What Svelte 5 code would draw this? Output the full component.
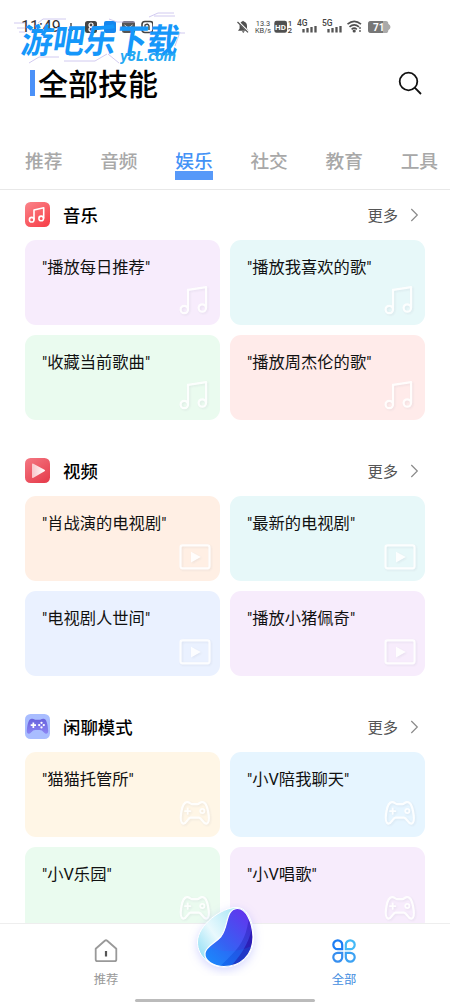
<script>
  const tabs = ['推荐', '音频', '娱乐', '社交', '教育', '工具'];
  const active = '娱乐';
  const sections = [
    {
      icon: 'music',
      title: '音乐',
      cards: [
        ['"播放每日推荐"', 'lilac'],
        ['"播放我喜欢的歌"', 'aqua'],
        ['"收藏当前歌曲"', 'mint'],
        ['"播放周杰伦的歌"', 'rose'],
      ],
    },
    {
      icon: 'video',
      title: '视频',
      cards: [
        ['"肖战演的电视剧"', 'peach'],
        ['"最新的电视剧"', 'aqua'],
        ['"电视剧人世间"', 'blue'],
        ['"播放小猪佩奇"', 'lilac'],
      ],
    },
    {
      icon: 'game',
      title: '闲聊模式',
      cards: [
        ['"猫猫托管所"', 'cream'],
        ['"小V陪我聊天"', 'sky'],
        ['"小V乐园"', 'mint'],
        ['"小V唱歌"', 'lilac'],
      ],
    },
  ];
</script>

{#snippet signal(label)}
  <svg class="signal" width="21" height="16" viewBox="0 0 21 16">
    <text x="0" y="7.4" class="net">{label}</text>
    <path d="M6.500 10V13.500M10.500 9V13.500M14.500 8V13.500M18.500 7V13.500" stroke="#555" stroke-width="2.3" />
  </svg>
{/snippet}

{#snippet outline(kind)}
  <svg class="mark" width="36" height="32" viewBox="0 0 36 32" fill="none" stroke="#fff" stroke-width="2.2" stroke-linejoin="round" stroke-linecap="round">
    {#if kind === 'music'}
      <circle cx="7.300" cy="24.500" r="3.7" />
      <circle cx="25.300" cy="23" r="3.7" />
      <path d="M11 24.500V4.800L29.100 2.100V23M11 7.700" />
    {:else if kind === 'video'}
      <rect x="3.500" y="4.300" width="29" height="23" rx="2" />
      <path d="M14 10.800L23.800 16.100L14 21.500Z" fill="#fff" stroke="none" />
    {:else}
      <path d="M9.500 5.200C12.500 4.400 13.200 7 15 7.200H20.500C22.500 7 23 4.400 26 5.200C29 5.800 30 9 31 14C32.300 20.500 32.700 25.800 29.400 26.600C26 27.300 25.200 21 22 20.600H13.500C10.300 21 9.500 27.300 6.200 26.600C2.800 25.800 3.300 20.500 4.500 14C5.500 9 6.500 5.800 9.500 5.200Z" />
      <path d="M8 14.200H13.400M10.700 11.500V16.900" stroke-width="1.8" />
      <circle cx="25.300" cy="14" r="2.1" stroke-width="1.8" />
    {/if}
  </svg>
{/snippet}

{#snippet badge(kind)}
  <svg class="badge" width="25" height="25" viewBox="0 0 25 25">
    <defs>
      <linearGradient id="red" x1="0" y1="0" x2="0.7" y2="1">
        <stop offset="0" stop-color="#fa858b" /><stop offset="1" stop-color="#f8444d" />
      </linearGradient>
      <linearGradient id="crimson" x1="0" y1="0" x2="0.7" y2="1">
        <stop offset="0" stop-color="#f47883" /><stop offset="1" stop-color="#e7404f" />
      </linearGradient>
      <linearGradient id="fade" x1="0" y1="0.5" x2="1" y2="0.6">
        <stop offset="0" stop-color="#fff" stop-opacity=".65" /><stop offset="1" stop-color="#fff" />
      </linearGradient>
      <linearGradient id="violet" x1="0" y1="0" x2="0" y2="1">
        <stop offset="0" stop-color="#6862dc" /><stop offset="1" stop-color="#8b85f4" />
      </linearGradient>
    </defs>
    {#if kind === 'music'}
      <rect width="25" height="25" rx="5.500" fill="url(#red)" />
      <g fill="none" stroke="#fff" stroke-width="1.6" stroke-linejoin="round">
        <circle cx="6.700" cy="17.700" r="2.300" />
        <circle cx="16.200" cy="16.400" r="2.300" />
        <path d="M9 17.700V8L18.700 5.800V16.400" />
      </g>
    {:else if kind === 'video'}
      <rect width="25" height="25" rx="5.500" fill="url(#crimson)" />
      <path d="M7 6.500Q7 5 8.400 5.800L19.500 11.800Q20.700 12.500 19.500 13.300L8.400 19.700Q7 20.500 7 19Z" fill="url(#fade)" />
    {:else}
      <rect width="25" height="25" rx="5.500" fill="#a9bdff" />
      <path d="M5.800 5C8.500 4 9.300 5.600 10.800 5.800H14.500C16 5.600 17 4 19.500 5C22 6 22.800 12 23.200 16.500C23.400 20 21 20.800 19 18.600C17.400 16.700 16.500 16 14.800 16H10.200C8.500 16 7.700 16.700 6 18.600C4 20.800 1.600 20 1.800 16.500C2.200 12 3 6 5.800 5Z" fill="url(#violet)" />
      <path d="M5.700 11.200H11M8.350 8.500V13.900" stroke="#fff" stroke-width="1.7" />
      <g fill="#fff"><circle cx="16.500" cy="8.800" r="1.150" /><circle cx="16.500" cy="13.400" r="1.150" /><circle cx="14.200" cy="11.100" r="1.150" /><circle cx="18.800" cy="11.100" r="1.150" /></g>
    {/if}
  </svg>
{/snippet}

<div class="screen">
  <header class="status">
    <span class="clock">11:49</span>
    <svg class="apps" width="86" height="14" viewBox="0 0 86 14">
      <path d="M4 3V11M1 10H6" stroke="#555" stroke-width="1.5" />
      <rect x="18" y="1" width="12" height="12" rx="2.5" fill="#444" />
      <circle cx="24" cy="5" r="2" fill="none" stroke="#fff" stroke-width="1.2" /><circle cx="24" cy="9.3" r="2" fill="none" stroke="#fff" stroke-width="1.2" />
      <rect x="37" y="1" width="12" height="12" rx="2" fill="#1687ee" />
      <rect x="55" y="1" width="13" height="12" rx="2.5" fill="#555" /><path d="M57.500 5L61.500 8L65.500 5" stroke="#ddd" fill="none" />
      <rect x="75" y="1.5" width="11" height="11" rx="3" fill="none" stroke="#444" stroke-width="1.6" /><path d="M78 10V5Q81 3 82 6V10" stroke="#444" fill="none" stroke-width="1.4" />
    </svg>
    <div class="right">
      <svg width="12" height="14" viewBox="0 0 12 14">
        <path d="M1 10.800L2.600 8.500V5.200C2.800 2.500 4.400 2 5.200 1.600Q6 0 6.900 1.600C9.200 2.200 10 4 10 6V8.600L11.500 10.800ZM4.800 11.300H7.700L6.300 13Z" fill="#505050" />
        <path d="M.2 .8L11.500 12" stroke="#fff" stroke-width="2" /><path d="M.5 2L11 12.400" stroke="#505050" stroke-width="1.200" />
      </svg>
      <span class="speed">13.3<br />KB/s</span>
      <svg width="19" height="15" viewBox="0 0 19 15">
        <rect x=".3" y="1.800" width="12.700" height="12" rx="2.2" fill="#505050" />
        <text x="1" y="10.900" class="hd">HD</text>
        <text x="13.700" y="7" class="sim">1</text><text x="13.400" y="14.200" class="sim">2</text>
      </svg>
      {@render signal('4G')}
      {@render signal('5G')}
      <svg width="15" height="13" viewBox="0 0 15 13" fill="none" stroke="#505050" stroke-width="1.6">
        <path d="M.5 4.200Q7.200-1.500 14 4.200M2.500 6.800Q7.200 2.800 12 6.800M4.600 9.300Q7.200 7.100 9.800 9.300" />
        <circle cx="7.200" cy="11" r=".8" fill="#505050" /><path d="M13 7V9M13 10V12" stroke-width="1.3" />
      </svg>
      <svg class="battery" width="23" height="12" viewBox="0 0 23 12">
        <path d="M3 0H18Q20.300 0 20.300 2.800Q22.500 4 22.500 6Q22.500 8 20.300 9.200Q20.300 12 18 12H3Q0 12 0 9V3Q0 0 3 0Z" fill="#aaa" />
        <path d="M3 0H15V12H3Q0 12 0 9V3Q0 0 3 0Z" fill="#777" />
        <text x="5" y="9.500" class="level">71</text>
      </svg>
    </div>
  </header>

  <div class="watermark">
    <svg width="175" height="57" viewBox="0 0 175 57">
      <g fill="none" stroke="#c5bdec" stroke-width=".8">
        <path d="M3 11H14M6 16H14M8 20H14M27 11L32 7H55M98 7L106 10H124M138 5L147 1H163M143 4H164M162 21H174M169 20L164 34M18 51L28 45H48M53 49H84L96 42M97 42L108 51" />
      </g>
      <g transform="translate(9 41) skewX(-9)"><text x="0" y="0" class="brand" textLength="157" lengthAdjust="spacingAndGlyphs">游吧乐下载</text></g>
      <text x="109" y="49" class="site" textLength="56" lengthAdjust="spacingAndGlyphs">y8L.com</text>
    </svg>
  </div>

  <div class="heading">
    <span class="bar"></span>
    <h1>全部技能</h1>
    <svg class="search" width="25" height="25" viewBox="0 0 25 25" fill="none" stroke="#111" stroke-width="1.8">
      <circle cx="10.500" cy="10.500" r="8.800" /><path d="M16.700 16.700L23 23" />
    </svg>
  </div>

  <nav class="tabs">
    {#each tabs as tab}
      <span class:active={tab === active}>{tab}</span>
    {/each}
  </nav>

  <main>
    {#each sections as section}
      <section>
        <div class="head">
          {@render badge(section.icon)}
          <h2>{section.title}</h2>
          <span class="more">更多</span>
          <svg width="9" height="14" viewBox="0 0 9 14" fill="none" stroke="#8a8a8a" stroke-width="1.2"><path d="M1.300 1L7.300 7L1.300 13" /></svg>
        </div>
        <div class="grid">
          {#each section.cards as [text, tone]}
            <div class="card {tone}">
              <p>{text}</p>
              {@render outline(section.icon)}
            </div>
          {/each}
        </div>
      </section>
    {/each}
  </main>

  <footer>
    <div class="item">
      <svg width="24" height="24" viewBox="0 0 24 24" fill="none" stroke="#999" stroke-width="1.8" stroke-linejoin="round">
        <path d="M1.700 9.700L10.800 1.700Q12 .8 13.200 1.700L22.300 9.700V20.500Q22.300 22.200 20.600 22.200H3.400Q1.700 22.200 1.700 20.500Z" /><path d="M12 12V17.500" stroke="#555" stroke-width="2.2" />
      </svg>
      <span>推荐</span>
    </div>
    <div class="orb">
      <svg width="76" height="76" viewBox="0 0 76 76">
        <defs>
          <linearGradient id="shell" x1="0" y1=".8" x2=".8" y2=".2"><stop offset="0" stop-color="#92dff5" /><stop offset=".45" stop-color="#e9f9fd" /><stop offset="1" stop-color="#abe7f7" /></linearGradient>
          <linearGradient id="wave" x1=".1" y1=".9" x2=".85" y2=".1"><stop offset="0" stop-color="#1a9cff" /><stop offset=".45" stop-color="#3562f3" /><stop offset="1" stop-color="#6b2cec" /></linearGradient>
          <linearGradient id="deep" x1=".1" y1="1" x2=".9" y2="0"><stop offset="0" stop-color="#115ce9" /><stop offset="1" stop-color="#4519bb" /></linearGradient>
          <clipPath id="body"><path d="M49 8.500C58 8 64.500 22 65 37C65 56 52 66.500 36 66.500C26 66.500 16 61 17 53C18 46 27 43.500 33 36.500C41 26 37 10 49 8.500Z" /></clipPath>
        </defs>
        <path class="glow" d="M49 7.500C60 8 65.500 22 65.500 38C65.500 56 52 67 36 67C23 67 9.500 57 9.500 42C9.500 25 34 7 49 7.500Z" fill="url(#shell)" stroke="#fff" stroke-width="1" />
        <g clip-path="url(#body)">
          <rect width="76" height="76" fill="url(#wave)" />
          <path d="M61 10Q61 35 48 50Q38 61 30 68H70V10Z" fill="url(#deep)" opacity=".7" />
          <path d="M65 22Q62 47 41 68H70V22Z" fill="#2610a5" opacity=".65" />
          <path d="M16 45Q40 57 66 45V70H16Z" fill="#008dff" opacity=".2" />
        </g>
        <path d="M49 8.500C58 8 64.500 22 65 37C65 56 52 66.500 36 66.500C26 66.500 16 61 17 53C18 46 27 43.500 33 36.500C41 26 37 10 49 8.500Z" fill="none" stroke="#fff" stroke-width="1.200" />
      </svg>
    </div>
    <div class="item on">
      <svg width="24" height="24" viewBox="0 0 24 24" fill="none" stroke-width="2.2">
        <path d="M10.200 10.200H5.800A4.450 4.450 0 1 1 10.200 5.800Z" stroke="#1c7df4" />
        <path d="M13.800 10.200V5.800A4.450 4.450 0 1 1 18.200 10.200Z" stroke="#44b9f6" />
        <path d="M10.200 13.800V18.200A4.450 4.450 0 1 1 5.800 13.800Z" stroke="#368eef" />
        <path d="M13.800 13.800H18.200A4.450 4.450 0 1 1 13.800 18.200Z" stroke="#3ca2f3" />
      </svg>
      <span>全部</span>
    </div>
    <i class="handle"></i>
  </footer>
</div>

<style>
  :global(body) { margin: 0; background: #fff; }
  .screen {
    position: relative; width: 450px; height: 1003px; overflow: hidden; background: #fff;
    display: flex; flex-direction: column; box-sizing: border-box;
    font-family: Roboto, "Noto Sans CJK SC", sans-serif; color: #111;
  }
  h1, h2, p { margin: 0; }
  svg { display: block; flex: none; }
  .status { height: 53px; display: flex; align-items: center; padding: 0 59px 0 21px; flex: none; box-sizing: border-box; }
  .clock { font-size: 16px; line-height: 16px; width: 46px; color: #333; }
  .right { margin-left: auto; display: flex; align-items: center; }
  .speed { width: 20px; margin-left: 4px; text-align: center; font: 7.4px/7px Roboto, sans-serif; color: #444; margin-right: 1px; }
  .right .signal { margin-left: 4px; }
  .right .signal + svg { margin-left: 4px; }
  .right .battery { margin-left: 6px; }
  .net { font: 500 8.5px Roboto, sans-serif; fill: #444; }
  .sim { font: 500 8px Roboto, sans-serif; fill: #444; }
  .hd { font: 700 8px Roboto, sans-serif; fill: #fff; }
  .level { font: 700 10px Roboto, sans-serif; fill: #fff; }
  .watermark { position: absolute; left: 11px; top: 12px; }
  .brand { font: 700 34px "Noto Sans CJK SC", sans-serif; fill: #1597fa; }
  .site { font: italic 700 14px "DejaVu Sans", sans-serif; fill: #24a8f3; }
  .heading { height: 62px; display: flex; align-items: center; padding: 0 27px 0 30px; flex: none; box-sizing: border-box; }
  .bar { width: 5px; height: 26px; background: #4b91f8; margin-right: 3px; margin-top: -2px; }
  h1 { font-size: 30px; line-height: 40px; font-weight: 500; color: #000; margin-top: 1px; }
  .search { margin: -2px 0 0 auto; }
  .tabs { height: 75px; display: flex; padding: 37px 12px 0 25px; justify-content: space-between; border-bottom: 1px solid #e8e8e8; box-sizing: border-box; flex: none; }
  .tabs span { height: 28px; font-size: 18.7px; line-height: 20px; font-weight: 500; color: #a8a8a8; box-sizing: border-box; }
  .tabs .active { color: #4392f6; border-bottom: 9px solid #5799f9; }
  main { padding: 0 25px; flex: 1; min-height: 0; overflow: hidden; }
  section { height: 256px; }
  .head { height: 50px; display: flex; align-items: center; padding-right: 6px; }
  .badge { margin-top: -1px; }
  h2 { margin: 1px 0 0 13px; font-size: 17.4px; line-height: 26px; font-weight: 500; color: #000; }
  .more { margin: 1px 12px 0 auto; font-size: 15.3px; line-height: 24px; color: #555; }
  .grid { display: grid; grid-template-columns: 195px 195px; grid-auto-rows: 85px; gap: 10px; }
  .card { border-radius: 11px; display: flex; flex-direction: column; justify-content: space-between; padding: 16px 7px 8px 17px; box-sizing: border-box; }
  .card p { font-size: 16.3px; line-height: 24px; color: #111; white-space: nowrap; }
  .mark { align-self: flex-end; filter: drop-shadow(1.5px 1.5px 1px rgba(90, 90, 120, .1)); opacity: .9; }
  .lilac { background: #f7ecfc; }
  .aqua { background: #e7f8f9; }
  .mint { background: #eafbef; }
  .rose { background: #ffebea; }
  .peach { background: #ffefe4; }
  .blue { background: #eaf1ff; }
  .cream { background: #fff6e6; }
  .sky { background: #e6f5ff; }
  footer { position: relative; height: 80px; flex: none; display: grid; grid-template-columns: 212px 26px 212px; border-top: 1px solid #eee; box-sizing: border-box; background: #fff; }
  .item { display: flex; flex-direction: column; align-items: center; padding-top: 15px; }
  .item span { margin-top: 7px; font-size: 12.3px; line-height: 20px; color: #999; }
  .item.on { grid-column: 3; }
  .item.on span { color: #438ddf; }
  .orb { position: absolute; left: 188px; top: -24px; }
  .glow { filter: drop-shadow(0 3px 5px rgba(90, 100, 255, .25)); }
  .handle { position: absolute; left: 135px; bottom: 1px; width: 180px; height: 3px; border-radius: 2px; background: #bbb; }
</style>
